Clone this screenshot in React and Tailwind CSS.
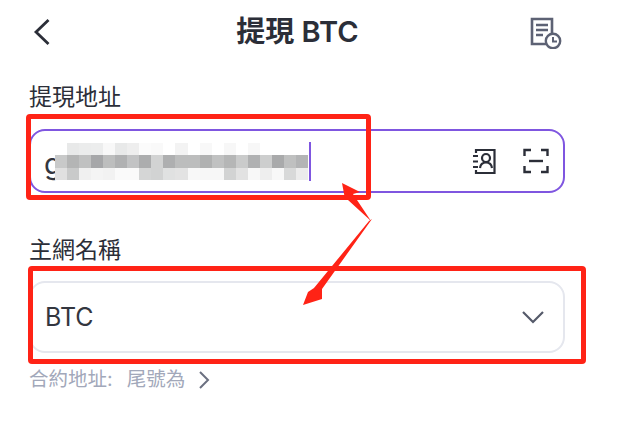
const cjk = { fontFamily: '"Inter","Noto Sans CJK TC","Noto Sans CJK SC",sans-serif' };

const rows = [
  ["#ffffff","#e8e9e9","#ebecec","#eceded","#f8f8f8","#e8e9e9","#eeeeee","#fbfbfb","#f9f9f9","#ffffff","#f3f3f3","#ffffff","#f8f8f8","#ffffff","#f7f7f7","#ffffff","#f7f7f7","#ffffff","#ffffff","#ffffff","#ffffff"],
  ["#c8c9c9","#b4b5b5","#c0c1c1","#a6a7a9","#bdbebe","#b0b1b2","#c2c3c4","#acadae","#d2d3d3","#aeafb0","#bcbdbd","#bcbdbd","#b0b1b1","#c0c1c1","#b5b6b6","#cacbcb","#b0b1b2","#cdcece","#a9aaab","#bfc0c0","#b3b4b5"],
  ["#e0e0e0","#c9caca","#f0f0f0","#f4f4f4","#f2f2f2","#fafafa","#fafafa","#d5d6d6","#d2d3d3","#e0e1e1","#e3e3e3","#f8f8f8","#f7f7f7","#f7f7f7","#d2d3d3","#e2e2e2","#f8f8f8","#eeeeee","#f8f8f8","#d8d9d9","#ececec"],
];

function Mosaic() {
  return (
    <div className="absolute left-[24px] top-[12px] flex h-[37px] w-[253px] flex-col">
      {rows.map((r, i) => (
        <div key={i} className="flex flex-1">
          {r.map((c, j) => (
            <div key={j} className="flex-1" style={{ background: c }} />
          ))}
        </div>
      ))}
    </div>
  );
}

function HistoryIcon() {
  return (
    <svg width="32" height="32" viewBox="0 0 32 32" fill="none">
      <path d="M19 27H2V2H22V17" stroke="#5d6274" strokeWidth="2.6" />
      <path d="M6 8H18M6 13H18M6 18H13" stroke="#5d6274" strokeWidth="2.4" />
      <circle cx="23" cy="24" r="7.2" fill="#fff" stroke="#5d6274" strokeWidth="2.4" />
      <path d="M23 20V24.5H27" stroke="#5d6274" strokeWidth="2" />
    </svg>
  );
}

function ContactIcon() {
  return (
    <svg width="24" height="27" viewBox="0 0 24 27" fill="none" stroke="#2b2e38" strokeWidth="2.2">
      <path d="M4 5V2H22.5V25H4V22" />
      <path d="M1 8H6M1 13.5H6M1 19H6" strokeWidth="2" />
      <circle cx="14" cy="10" r="4" />
      <path d="M8 20C8.5 16 11 14.5 14 14.5C17 14.5 19.5 16 20 20" />
    </svg>
  );
}

function ScanIcon() {
  return (
    <svg width="26" height="26" viewBox="0 0 26 26" fill="none" stroke="#2b2e38" strokeWidth="2.4">
      <path d="M1.5 8V2H8M18 2H24.5V8M1.5 18V24H8M18 24H24.5V18" />
      <path d="M6 13H20" />
    </svg>
  );
}

export default function App() {
  return (
    <div className="relative h-[427px] w-[622px] overflow-hidden bg-white" style={cjk}>
      <header className="flex h-[66px] items-center justify-between pl-[33px] pr-[60px]">
        <svg width="18" height="28" viewBox="0 0 18 28" fill="none" className="-translate-y-px">
          <path d="M15.5 2L3 14L15.5 26" stroke="#2b2e38" strokeWidth="2.8" />
        </svg>
        <h1 className="translate-x-[7px] -translate-y-0.5 text-[29px] font-semibold leading-none text-[#2b2e38]">提現 BTC</h1>
        <HistoryIcon />
      </header>

      <main className="flex flex-col pl-[29px] pr-[57px]">
        <label className="mt-[16px] text-[23px] leading-[30px] text-[#2b2e38]">提現地址</label>
        <div className="relative mt-[17px] flex h-[64px] items-center justify-between rounded-[16px] border-2 border-[#7f56e0] pl-[13px] pr-[14px]">
          <span className="translate-y-[2px] text-[29px] leading-none text-[#33363f]">g</span>
          <Mosaic />
          <div className="absolute left-[278px] top-[11px] h-[39px] w-[2px] bg-[#7f56e0]" />
          <div className="flex items-center gap-[27px]">
            <ContactIcon />
            <ScanIcon />
          </div>
        </div>

        <label className="mt-[42px] text-[23px] leading-[30px] text-[#2b2e38]">主網名稱</label>
        <div className="mt-[16px] flex h-[72px] items-center justify-between rounded-[16px] border-2 border-[#e5e7ee] pl-[14px] pr-[18px]">
          <span className="text-[25px] leading-none text-[#33363f]">BTC</span>
          <svg width="24" height="16" viewBox="0 0 24 16" fill="none">
            <path d="M2 3L12 13L22 3" stroke="#555a6a" strokeWidth="2.2" />
          </svg>
        </div>

        <div className="mt-[17px] flex items-center text-[19.5px] leading-none text-[#a2a8ba]">
          <span>合約地址:</span>
          <span className="ml-[14px]">尾號為</span>
          <svg width="12" height="20" viewBox="0 0 12 20" fill="none" className="ml-[13px]">
            <path d="M2 2L10 10L2 18" stroke="#6b7080" strokeWidth="2" />
          </svg>
        </div>
      </main>

      <div className="absolute left-[26px] top-[114px] h-[86px] w-[345px] rounded-[4px] border-[5px] border-[#ff2316]" />
      <div className="absolute left-[28px] top-[266px] h-[98px] w-[558px] rounded-[4px] border-[5px] border-[#ff2316]" />
      <svg className="absolute left-0 top-0" width="622" height="427" viewBox="0 0 622 427">
        <polygon points="342,183 360,192 353,194 371,221 348,200 345,199" fill="#ff2316" />
        <polygon points="372,219 322,289 322,299 303,305 308,292 314,288 369,221" fill="#ff2316" />
      </svg>
    </div>
  );
}
